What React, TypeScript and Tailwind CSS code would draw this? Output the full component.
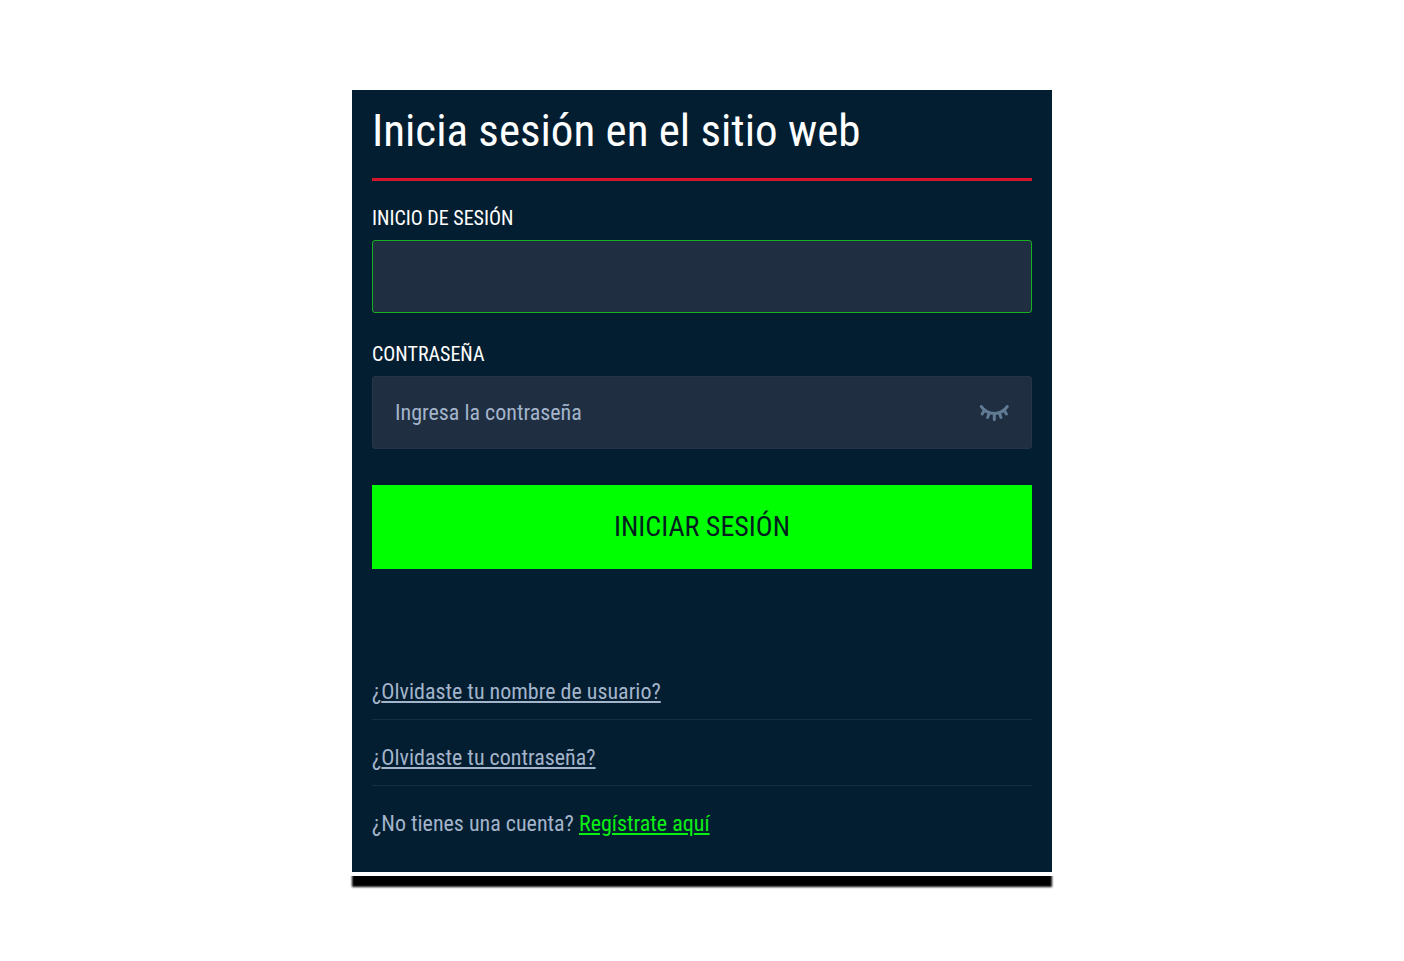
import { useState } from 'react';

interface FieldLabelProps {
  htmlFor: string;
  children: React.ReactNode;
}

function FieldLabel({ htmlFor, children }: FieldLabelProps): React.ReactElement {
  return (
    <label htmlFor={htmlFor} className="block text-[20px] leading-7 uppercase text-white">
      {children}
    </label>
  );
}

function ClosedEyeIcon(): React.ReactElement {
  return (
    <svg
      viewBox="0 0 30 18"
      className="block h-[18px] w-[30px]"
      fill="none"
      stroke="currentColor"
      strokeWidth="3"
      strokeLinecap="round"
      strokeLinejoin="round"
      aria-hidden="true"
    >
      <path d="M2.4 2.6C5.4 7 9.8 9.4 15.3 9.4S25.2 7 28.2 2.6" />
      <path d="M5.4 6.4L3.2 10M10.2 9L8.6 13.4M15.3 10V15.4M20.4 9L22 13.4M25.2 6.4L27.4 10" />
    </svg>
  );
}

export default function App(): React.ReactElement {
  const [visible, setVisible] = useState(false);

  return (
    <div className="min-h-screen bg-white px-4 pt-[90px] pb-16 font-['Roboto_Condensed','Roboto',sans-serif]">
      <main className="mx-auto max-w-[700px]">
        <section className="bg-[#031e30] px-5 pb-8">
          <h1 className="border-b-3 border-[#d5152c] pt-[13px] pb-[19px] text-[45px] leading-14 text-white">
            Inicia sesión en el sitio web
          </h1>

          <form className="pt-[23px]" onSubmit={(e) => e.preventDefault()}>
            <FieldLabel htmlFor="login">Inicio de sesión</FieldLabel>
            <input
              id="login"
              type="text"
              className="mt-2 block h-[73px] w-full rounded-[3px] border border-[#16b01f] bg-[#1f2e40] px-6 text-[22px] text-[#a3b4cb] outline-none"
            />

            <div className="pt-[27px]">
              <FieldLabel htmlFor="password">Contraseña</FieldLabel>
              <div className="mt-2 flex h-[73px] items-center rounded-[3px] border border-[#24354a] bg-[#1f2e40] px-[22px]">
                <input
                  id="password"
                  type={visible ? 'text' : 'password'}
                  placeholder="Ingresa la contraseña"
                  className="min-w-0 flex-1 bg-transparent text-[22px] leading-8 text-[#a3b4cb] outline-none placeholder:text-[#a3b4cb]"
                />
                <button
                  type="button"
                  aria-label="Mostrar contraseña"
                  onClick={() => setVisible(!visible)}
                  className="shrink-0 text-[#627b94]"
                >
                  <ClosedEyeIcon />
                </button>
              </div>
            </div>

            <button
              type="submit"
              className="mt-9 block h-[84px] w-full bg-[#00ff00] text-[28px] uppercase text-[#031e20]"
            >
              Iniciar sesión
            </button>
          </form>

          <div className="pt-[85px] text-[22px] leading-8 text-[#a3b4cb]">
            <p className="border-b border-[#132f41] pt-[22px] pb-[11px]">
              ¿<a href="#usuario" className="underline">Olvidaste tu nombre de usuario?</a>
            </p>
            <p className="border-b border-[#132f41] pt-[22px] pb-[11px]">
              ¿<a href="#contrasena" className="underline">Olvidaste tu contraseña?</a>
            </p>
            <p className="pt-[22px]">
              ¿No tienes una cuenta?{' '}
              <a href="#registro" className="text-[#0aef14] underline">Regístrate aquí</a>
            </p>
          </div>
        </section>

        {/* Hard-edged shadow strip under the card */}
        <div className="-mx-2 mt-1 overflow-hidden px-2 pb-2">
          <div className="-mt-2 h-[19px] bg-black blur-[1px]" />
        </div>
      </main>
    </div>
  );
}
